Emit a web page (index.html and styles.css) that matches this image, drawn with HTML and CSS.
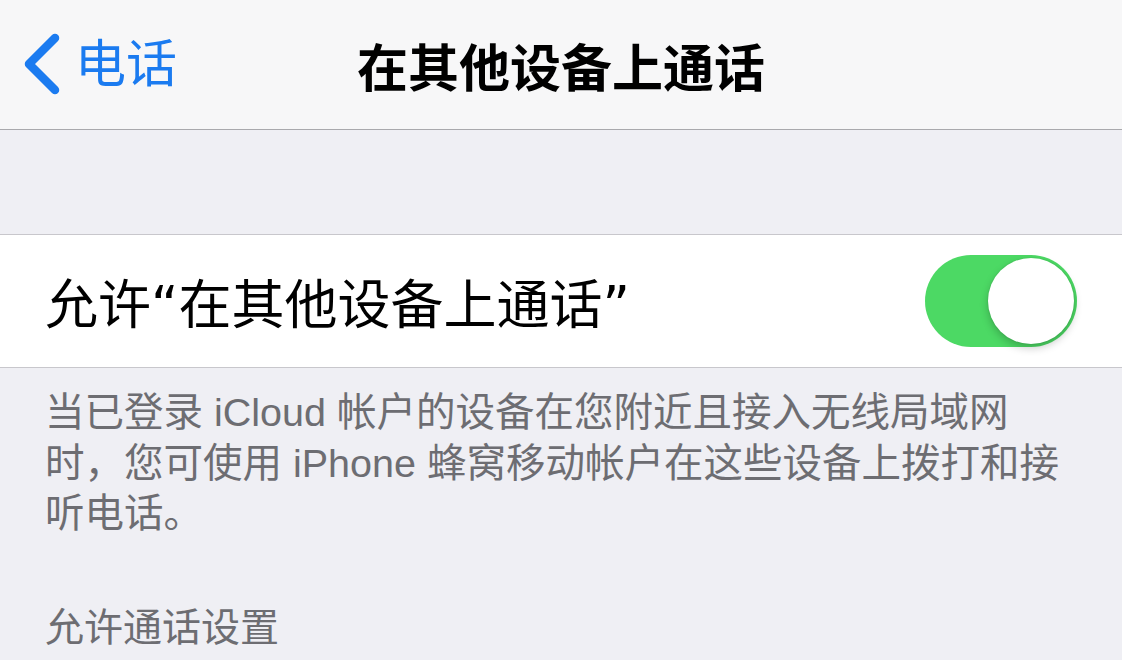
FILE: index.html
```html
<!DOCTYPE html>
<html lang="zh-CN">
<head>
    <meta charset="utf-8">
    <title>在其他设备上通话</title>
    <link rel="stylesheet" href="styles.css">
</head>
<body>
    <header class="navbar">
        <a class="back" href="#">
            <svg class="chevron" width="40" height="64" viewBox="0 0 40 64">
                <path d="M33 5 L7 31 L33 57" />
            </svg>
            <span>电话</span>
        </a>
        <h1 class="title">在其他设备上通话</h1>
        <div></div>
    </header>

    <div class="group">
        <div class="cell">
            <span class="label">允许“在其他设备上通话”</span>
            <div class="switch on"><div class="knob"></div></div>
        </div>
    </div>
    <p class="footer">当已登录 iCloud 帐户的设备在您附近且接入无线局域网时，您可使用 iPhone 蜂窝移动帐户在这些设备上拨打和接听电话。</p>

    <h2 class="section-header">允许通话设置</h2>
</body>
</html>
```

FILE: styles.css
```css
* {
    box-sizing: border-box;
}
html, body {
    margin: 0;
    padding: 0;
}
body {
    background: #efeff4;
    font-family: "Liberation Sans", "Noto Sans CJK SC", sans-serif;
    color: #000;
    height: 660px;
    overflow: hidden;
}

/* top navigation bar */
.navbar {
    display: grid;
    grid-template-columns: 1fr auto 1fr;
    align-items: center;
    height: 130px;
    background: #f7f7f8;
    border-bottom: 1px solid #a9a9ad;
}
.back {
    display: flex;
    align-items: center;
    gap: 13px;
    padding-left: 22px;
    color: #1b7bf0;
    text-decoration: none;
    font-size: 51px;
    line-height: 1;
}
.chevron path {
    fill: none;
    stroke: #1b7bf0;
    stroke-width: 8.5;
    stroke-linecap: round;
    stroke-linejoin: round;
}
.title {
    margin: 0;
    font-size: 51px;
    font-weight: 700;
    letter-spacing: 0;
}

/* settings group */
.group {
    margin-top: 104px;
    background: #fff;
    border-top: 1px solid #c8c7cc;
    border-bottom: 1px solid #c8c7cc;
}
.cell {
    display: flex;
    align-items: center;
    justify-content: space-between;
    height: 132px;
    padding: 0 45px;
}
.label {
    font-family: "DejaVu Sans", "Noto Sans CJK SC", sans-serif;
    font-size: 53px;
}

/* toggle switch */
.switch {
    display: flex;
    align-items: center;
    justify-content: flex-end;
    width: 152px;
    height: 92px;
    padding: 0 3px;
    border-radius: 46px;
    background: #4cd964;
}
.knob {
    width: 86px;
    height: 86px;
    border-radius: 50%;
    background: #fff;
    box-shadow: 0 4px 8px rgba(0, 0, 0, 0.22), 0 0 0 1px rgba(0, 0, 0, 0.04);
}

.footer {
    margin: 0;
    padding: 19px 47px 0 45px;
    font-size: 39.5px;
    line-height: 50.5px;
    color: #6d6d72;
}
.section-header {
    margin: 0;
    padding: 64px 45px 0;
    font-size: 39px;
    font-weight: normal;
    line-height: 50px;
    color: #6d6d72;
}
```
